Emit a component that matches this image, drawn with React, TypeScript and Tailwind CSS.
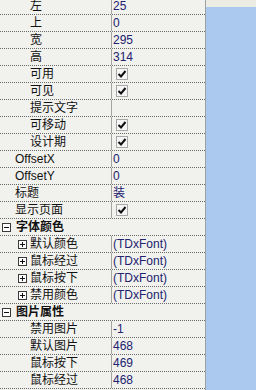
const FONT = '"Liberation Sans", "Noto Sans CJK SC", sans-serif';

type Row =
  | { kind: 'prop'; label: string; indent: 'top' | 'sub' | 'node'; value?: string; check?: boolean }
  | { kind: 'group'; label: string };

const ROWS: Row[] = [
  { kind: 'prop', label: '左', indent: 'sub', value: '25' },
  { kind: 'prop', label: '上', indent: 'sub', value: '0' },
  { kind: 'prop', label: '宽', indent: 'sub', value: '295' },
  { kind: 'prop', label: '高', indent: 'sub', value: '314' },
  { kind: 'prop', label: '可用', indent: 'sub', check: true },
  { kind: 'prop', label: '可见', indent: 'sub', check: true },
  { kind: 'prop', label: '提示文字', indent: 'sub' },
  { kind: 'prop', label: '可移动', indent: 'sub', check: true },
  { kind: 'prop', label: '设计期', indent: 'sub', check: true },
  { kind: 'prop', label: 'OffsetX', indent: 'top', value: '0' },
  { kind: 'prop', label: 'OffsetY', indent: 'top', value: '0' },
  { kind: 'prop', label: '标题', indent: 'top', value: '装' },
  { kind: 'prop', label: '显示页面', indent: 'top', check: true },
  { kind: 'group', label: '字体颜色' },
  { kind: 'prop', label: '默认颜色', indent: 'node', value: '(TDxFont)' },
  { kind: 'prop', label: '鼠标经过', indent: 'node', value: '(TDxFont)' },
  { kind: 'prop', label: '鼠标按下', indent: 'node', value: '(TDxFont)' },
  { kind: 'prop', label: '禁用颜色', indent: 'node', value: '(TDxFont)' },
  { kind: 'group', label: '图片属性' },
  { kind: 'prop', label: '禁用图片', indent: 'sub', value: '-1' },
  { kind: 'prop', label: '默认图片', indent: 'sub', value: '468' },
  { kind: 'prop', label: '鼠标按下', indent: 'sub', value: '469' },
  { kind: 'prop', label: '鼠标经过', indent: 'sub', value: '468' },
];

function TreeBox({ open }: { open: boolean }) {
  return (
    <svg width="9" height="9" viewBox="0 0 9 9" className="shrink-0">
      <rect x="0.5" y="0.5" width="8" height="8" fill="#fff" stroke="#3a3a3a" />
      <path d="M2 4.5H7" stroke="#111" />
      {!open && <path d="M4.5 2V7" stroke="#111" />}
    </svg>
  );
}

function Check() {
  return (
    <div className="ml-[3px] w-[12px] h-[12px] border border-[#a8a8a8] bg-[#f6f6f6] flex items-center justify-center">
      <svg width="10" height="10" viewBox="0 0 10 10">
        <path d="M1.5 5 L4 7.5 L8.5 2" stroke="#111" strokeWidth="2" fill="none" />
      </svg>
    </div>
  );
}

export default function App() {
  return (
    <div className="w-[256px] h-[390px] flex overflow-hidden bg-[#f1f1ee]" style={{ fontFamily: FONT }}>
      <div className="w-[206px] shrink-0 border-r border-[#9aa2a6] overflow-hidden">
        <div className="-mt-[2px] flex flex-col">
          {ROWS.map((row, i) =>
            row.kind === 'group' ? (
              <div
                key={i}
                className="h-[17px] flex items-center gap-[5px] pl-[2px] border-b border-dotted border-[#6a6a6a] text-[12px] font-bold text-[#111]"
              >
                <TreeBox open />
                <span className="leading-none">{row.label}</span>
              </div>
            ) : (
              <div key={i} className="h-[17px] flex border-b border-dotted border-[#6a6a6a] text-[12px]">
                <div
                  className={
                    'w-[112px] shrink-0 border-r border-[#a4a4a4] flex items-center text-[#111] ' +
                    (row.indent === 'top' ? 'pl-[15px]' : row.indent === 'node' ? 'pl-[18px] gap-[3px]' : 'pl-[30px]')
                  }
                >
                  {row.indent === 'node' && <TreeBox open={false} />}
                  <span className="leading-none whitespace-nowrap">{row.label}</span>
                </div>
                <div className="flex-1 flex items-center pl-[1px] text-[#22226e]">
                  {row.check ? <Check /> : <span className="leading-none whitespace-nowrap">{row.value}</span>}
                </div>
              </div>
            )
          )}
        </div>
      </div>
      <div className="flex-1 flex flex-col">
        <div className="h-[7px] bg-[#ecece5]" />
        <div className="flex-1 bg-[#abc8ef]" />
      </div>
    </div>
  );
}
